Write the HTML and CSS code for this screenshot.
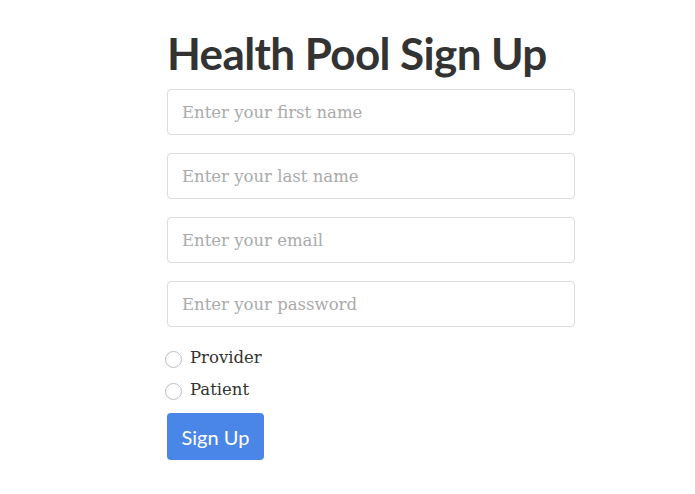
FILE: index.html
```
<!DOCTYPE html>
<html>
<head>
<meta charset="utf-8">
<link rel="stylesheet" href="styles.css">
</head>
<body>
<div class="page">
  <h1 class="title">Health Pool Sign Up</h1>
  <form class="form">
    <input class="field" type="text" placeholder="Enter your first name">
    <input class="field" type="text" placeholder="Enter your last name">
    <input class="field" type="email" placeholder="Enter your email">
    <input class="field" type="password" placeholder="Enter your password">
    <div class="radios">
      <label class="radio"><span class="dot"></span><span class="label">Provider</span></label>
      <label class="radio"><span class="dot"></span><span class="label">Patient</span></label>
    </div>
    <button class="btn" type="button">Sign Up</button>
  </form>
</div>
</body>
</html>
```
FILE: styles.css
```
html, body { margin: 0; padding: 0; background: #fff; }
.page { padding: 27px 0 0 167px; width: 408px; }
.title {
  margin: 0;
  font-family: Lato, "Open Sans", sans-serif;
  font-weight: 700;
  font-size: 44px;
  line-height: 52px;
  color: #333;
  letter-spacing: -0.6px;
}
.form { display: flex; flex-direction: column; margin-top: 10px; }
.field {
  box-sizing: border-box;
  width: 408px;
  height: 46px;
  margin: 0 0 18px 0;
  padding: 0 14px;
  border: 1px solid #dcdcdc;
  border-radius: 4px;
  font-family: "DejaVu Serif", Georgia, serif;
  font-size: 16.5px;
  color: #333;
  outline: none;
}
.field::placeholder { color: #aaa; }
.radios { display: flex; flex-direction: column; gap: 8px; margin-top: 0; }
.radio { display: flex; align-items: center; gap: 8px; height: 24px; }
.dot {
  box-sizing: border-box;
  width: 17px; height: 17px;
  border: 1px solid #bfbfbf;
  border-radius: 50%;
  margin-left: -2px;
  margin-top: 5px;
}
.label {
  font-family: "DejaVu Serif", Georgia, serif;
  font-size: 16.5px;
  color: #333;
}
.btn {
  margin-top: 12px;
  width: 97px;
  height: 47px;
  border: none;
  border-radius: 4px;
  background: #4a86e8;
  color: #fff;
  font-family: Lato, "Open Sans", sans-serif;
  font-size: 20px;
  padding: 0;
}
```
